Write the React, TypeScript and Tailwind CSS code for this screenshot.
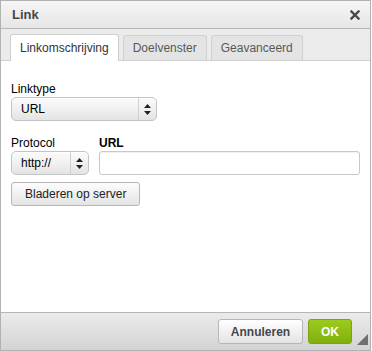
function SelectBox({ value, width }: { value: string; width: string }) {
  return (
    <div
      className={`${width} h-[24px] flex items-stretch rounded-[5px] border border-[#c4c4c4] bg-gradient-to-b from-[#fbfbfb] via-[#f1f1f1] to-[#e3e3e3] shadow-[inset_0_1px_0_#fff]`}
    >
      <span className="flex-1 flex items-center pl-[9px] text-[12px] text-black">{value}</span>
      <span className="w-[18px] border-l border-[#d0d0d0] flex items-center justify-center">
        <svg width="7" height="11" viewBox="0 0 7 11">
          <path d="M3.5 0 L7 4 L0 4 Z" fill="#222" />
          <path d="M3.5 11 L7 7 L0 7 Z" fill="#222" />
        </svg>
      </span>
    </div>
  )
}

function Tab({ label, active }: { label: string; active?: boolean }) {
  return (
    <div
      className={`px-[9px] flex items-center border border-b-0 rounded-t-[3px] text-[12px] ${
        active
          ? 'h-[27px] -mb-px bg-white border-[#cfcfcf] text-[#333]'
          : 'h-[25px] bg-[#e4e4e4] border-[#d0d0d0] text-[#595959]'
      }`}
    >
      {label}
    </div>
  )
}

export default function App() {
  return (
    <div className="w-[372px] h-[351px] bg-white font-['Liberation_Sans',Arial,sans-serif]">
      <div className="w-[371px] h-[351px] border border-[#b2b2b2] flex flex-col bg-white">
        {/* title */}
        <div className="h-[28px] shrink-0 flex items-center justify-between pl-[11px] pr-[10px] bg-gradient-to-b from-[#f6f6f6] to-[#e6e6e6] border-b border-[#b6b6b6]">
          <span className="text-[13px] font-bold text-[#474747]">Link</span>
          <svg width="10" height="10" viewBox="0 0 10 10">
            <path d="M1.5 1.5 L8.5 8.5 M8.5 1.5 L1.5 8.5" stroke="#4a4a4a" strokeWidth="2.4" strokeLinecap="square" />
          </svg>
        </div>

        {/* tabs */}
        <div className="h-[32px] shrink-0 flex items-end gap-[4px] pl-[9px] bg-[#ebebeb] border-b border-[#cfcfcf]">
          <Tab label="Linkomschrijving" active />
          <Tab label="Doelvenster" />
          <Tab label="Geavanceerd" />
        </div>

        {/* content */}
        <div className="flex-1 px-[10px] pt-[21px] text-[12px] text-black">
          <div className="leading-[15px]">Linktype</div>
          <SelectBox value="URL" width="w-[146px]" />

          <div className="mt-[15px] flex gap-[10px]">
            <div>
              <div className="leading-[15px]">Protocol</div>
              <SelectBox value="http://" width="w-[78px]" />
            </div>
            <div className="flex-1">
              <div className="leading-[15px] font-bold">URL</div>
              <div className="h-[24px] rounded-[3px] border border-[#c9c9c9] bg-white shadow-[inset_0_1px_1px_rgba(0,0,0,0.06)]" />
            </div>
          </div>

          <button className="mt-[7px] h-[24px] px-[13px] rounded-[3px] border border-[#b7b7b7] bg-gradient-to-b from-[#fdfdfd] to-[#e4e4e4] text-[12px] text-[#222]">
            Bladeren op server
          </button>
        </div>

        {/* footer */}
        <div className="relative h-[38px] shrink-0 flex items-center justify-end gap-[5px] pr-[18px] bg-gradient-to-b from-[#ebebeb] to-[#d3d3d3] border-t border-[#b6b6b6]">
          <button className="h-[25px] w-[85px] rounded-[3px] border border-[#b6b6b6] bg-gradient-to-b from-[#ffffff] to-[#e4e4e4] text-[12px] font-bold text-[#474747]">
            Annuleren
          </button>
          <button className="h-[25px] w-[44px] rounded-[3px] border border-[#7da114] bg-gradient-to-b from-[#9ccb1e] to-[#80b00b] text-[12px] font-bold text-white">
            OK
          </button>
          <svg className="absolute right-[2px] bottom-[5px]" width="11" height="11" viewBox="0 0 11 11">
            <path d="M11 0 L11 11 L0 11 Z" fill="#6f6f6f" />
          </svg>
        </div>
      </div>
    </div>
  )
}
